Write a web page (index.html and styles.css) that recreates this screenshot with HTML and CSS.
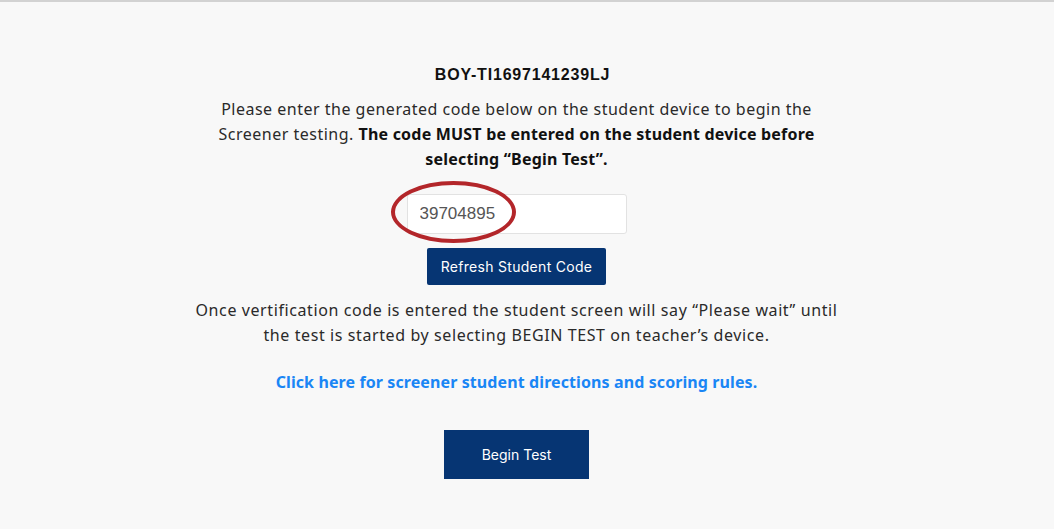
FILE: index.html
```html
<!DOCTYPE html>
<html lang="en">
<head>
  <meta charset="UTF-8" />
  <title>Screener Student Code</title>
  <link rel="stylesheet" href="styles.css">
</head>
<body>
  <div class="page">
    <div class="panel">
      <h3 class="session-id">BOY-TI1697141239LJ</h3>
      <p class="intro">
        Please enter the generated code below on the student device to begin the
        Screener testing. <strong>The code MUST be entered on the student device before
        selecting “Begin Test”.</strong>
      </p>

      <div class="code-box">
        <input class="code-input" type="text" value="39704895" readonly>
        <span class="highlight-ring"></span>
      </div>
      <button class="btn btn-refresh">Refresh Student Code</button>

      <p class="note">
        Once vertification code is entered the student screen will say “Please wait” until
        the test is started by selecting BEGIN TEST on teacher’s device.
      </p>

      <a class="directions" href="#">Click here for screener student directions and scoring rules.</a>

      <button class="btn btn-begin">Begin Test</button>
    </div>
  </div>
</body>
</html>
```

FILE: styles.css
```css
* {
  box-sizing: border-box;
}

body {
  margin: 0;
  background: #f8f8f8;
  border-top: 2px solid #d2d2d2;
  font-family: 'Noto Sans', 'Open Sans', sans-serif;
  color: #222;
}

.page {
  display: flex;
  justify-content: center;
  padding: 63px 21px 0 0;
}

.panel {
  width: 700px;
  display: flex;
  flex-direction: column;
  align-items: center;
  text-align: center;
}

.session-id {
  margin: 0;
  padding-left: 12px;
  font-family: 'Liberation Sans', Arial, sans-serif;
  font-size: 16px;
  letter-spacing: 0.8px;
  font-weight: bold;
  color: #111;
  line-height: 20px;
}

.intro {
  margin: 12px 0 0;
  width: 610px;
  font-size: 16px;
  letter-spacing: 0.5px;
  line-height: 25px;
  color: #2a2a2a;
}

.intro strong {
  color: #111;
  letter-spacing: 0.2px;
}

.code-box {
  position: relative;
  margin-top: 22px;
}

.code-input {
  display: block;
  width: 220px;
  height: 40px;
  padding: 0 12px;
  border: 1px solid #e2e2e2;
  border-radius: 3px;
  background: #fff;
  font-family: 'Liberation Sans', Arial, sans-serif;
  font-size: 17px;
  color: #555;
  outline: none;
}

.highlight-ring {
  position: absolute;
  left: -16px;
  top: -13px;
  width: 125px;
  height: 62px;
  border: 4px solid #b3262a;
  border-radius: 50%;
  pointer-events: none;
}

.btn {
  border: none;
  border-radius: 2px;
  background: #063573;
  color: #fff;
  font-family: 'Inter', 'Noto Sans', sans-serif;
  font-size: 14px;
  cursor: pointer;
}

.btn-refresh {
  margin-top: 14px;
  width: 179px;
  height: 37px;
  letter-spacing: 0.3px;
}

.note {
  margin: 13px 0 0;
  width: 670px;
  font-size: 16px;
  letter-spacing: 0.6px;
  line-height: 25px;
  color: #2a2a2a;
}

.directions {
  margin-top: 23px;
  font-size: 16px;
  letter-spacing: 0.1px;
  font-weight: bold;
  color: #1a86f5;
  text-decoration: none;
}

.btn-begin {
  margin-top: 37px;
  width: 145px;
  height: 49px;
  border-radius: 0;
}
```
